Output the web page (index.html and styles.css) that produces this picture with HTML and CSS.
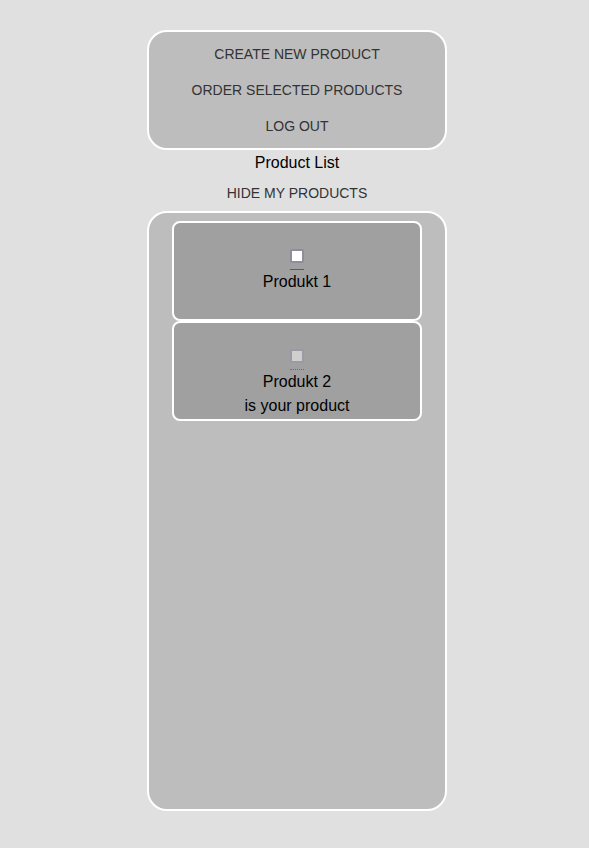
FILE: index.html
```html
<!DOCTYPE html>
<html lang="en">
<head>
<meta charset="utf-8">
<meta name="viewport" content="width=device-width, initial-scale=1">
<title>Product List</title>
<link rel="stylesheet" href="styles.css">
</head>
<body>
<main class="page">
  <nav class="panel menu">
    <button class="button" type="button">Create new product</button>
    <button class="button" type="button">Order selected products</button>
    <button class="button" type="button">Log out</button>
  </nav>
  <h1 class="title">Product List</h1>
  <button class="button" type="button">Hide my products</button>
  <ul class="panel products">
    <li class="card">
      <span class="field"><input class="check" type="checkbox" id="product-1"></span>
      <label for="product-1">Produkt 1</label>
    </li>
    <li class="card">
      <span class="field field-disabled"><input class="check" type="checkbox" id="product-2" disabled></span>
      <label for="product-2">Produkt 2</label>
      <span>is your product</span>
    </li>
  </ul>
</main>
</body>
</html>
```

FILE: styles.css
```css
* {
  box-sizing: border-box;
}

body {
  margin: 0;
  min-height: 100vh;
  background: #e0e0e0;
  color: #000;
  font-family: "Liberation Sans", Arial, sans-serif;
  font-size: 16px;
  line-height: 24px;
}

.page {
  display: flex;
  flex-direction: column;
  align-items: center;
  padding: 30px 0 30px 5px;
}

.panel {
  display: flex;
  flex-direction: column;
  align-items: center;
  width: 100%;
  max-width: 300px;
  margin: 0;
  border: 2px solid #fff;
  border-radius: 20px;
  background: #bdbdbd;
}

.menu {
  margin-bottom: 1px;
  padding: 4px 0;
}

.button {
  padding: 6px 8px;
  border: 0;
  background: transparent;
  color: #333;
  font: inherit;
  font-size: 14px;
  text-transform: uppercase;
  cursor: pointer;
}

.title {
  margin: 0;
  font-size: 16px;
  font-weight: 400;
}

.products {
  min-height: 600px;
  padding: 8px;
  list-style: none;
}

.card {
  display: flex;
  flex-direction: column;
  align-items: center;
  width: 100%;
  max-width: 250px;
  min-height: 100px;
  border: 2px solid #fff;
  border-radius: 8px;
  background: #a0a0a0;
}

.field {
  display: flex;
  margin-top: 26px;
  padding-bottom: 6px;
  border-bottom: 1px solid #5c5c5c;
}

.field-disabled {
  border-bottom: 1px dotted #6c6c6c;
}

.check {
  appearance: none;
  width: 14px;
  height: 14px;
  margin: 0;
  border: 2px solid #8f8d9c;
  border-radius: 2px;
  background: #fff;
}

.check:checked {
  background: #333;
}

.check:disabled {
  border-color: #9b9aa5;
  background: #cfcfcf;
}
```
